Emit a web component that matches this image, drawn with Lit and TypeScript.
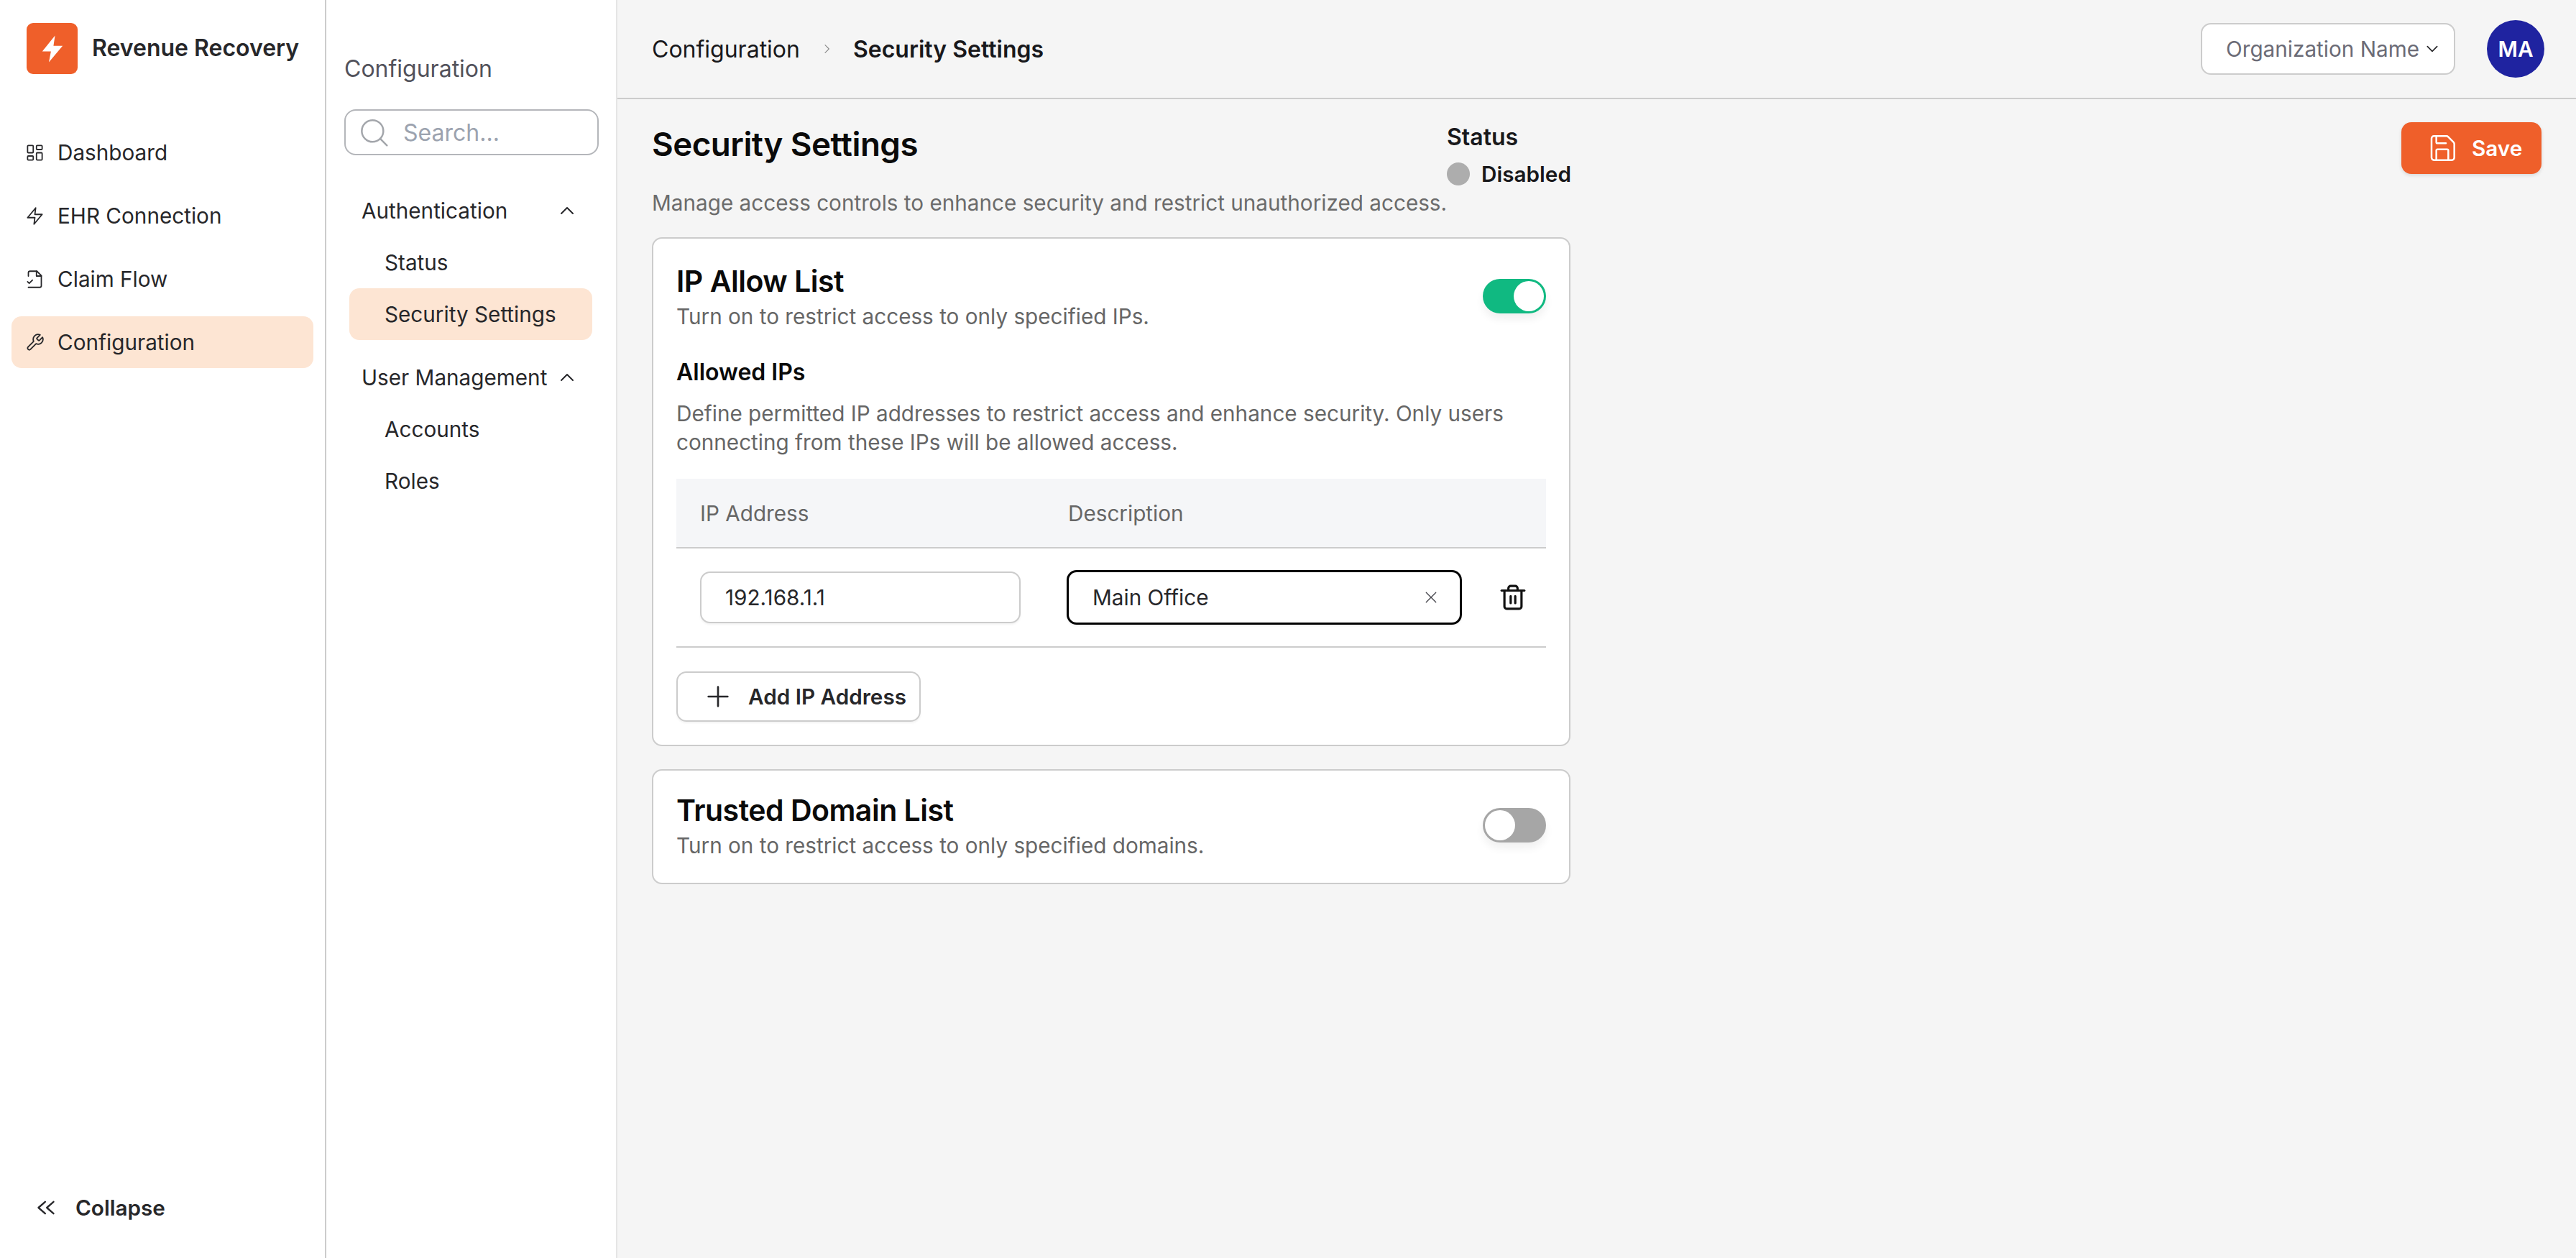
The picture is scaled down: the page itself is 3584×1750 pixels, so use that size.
import { LitElement, css, html, svg } from 'lit'
import { customElement, property } from 'lit/decorators.js'

const icons: Record<string, unknown> = {
  dashboard: svg`<rect x="3" y="3" width="7" height="9" rx="1"/><rect x="14" y="3" width="7" height="5" rx="1"/><rect x="14" y="12" width="7" height="9" rx="1"/><rect x="3" y="16" width="7" height="5" rx="1"/>`,
  zap: svg`<path d="M13 2 3 14h9l-1 8 10-12h-9l1-8z"/>`,
  claim: svg`<path d="M4 8V4a2 2 0 0 1 2-2h8.5L20 7.5V20a2 2 0 0 1-2 2H4"/><path d="M14 2v6h6"/><path d="m3 15 2 2 4-4"/>`,
  wrench: svg`<path d="M14.7 6.3a1 1 0 0 0 0 1.4l1.6 1.6a1 1 0 0 0 1.4 0l3.77-3.77a6 6 0 0 1-7.94 7.94l-6.91 6.91a2.12 2.12 0 0 1-3-3l6.91-6.91a6 6 0 0 1 7.94-7.94l-3.76 3.76z"/>`,
  up: svg`<path d="m4 16 8-8 8 8"/>`,
  down: svg`<path d="m4 8 8 8 8-8"/>`,
  right: svg`<path d="m9 4 8 8-8 8"/>`,
  collapse: svg`<path d="m11 5-8 7 8 7"/><path d="m21 5-8 7 8 7"/>`,
  search: svg`<circle cx="11" cy="11" r="9"/><path d="m23 23-5.5-5.5"/>`,
  save: svg`<path d="M5 2h10.5a2 2 0 0 1 1.4.6l4.5 4.5a2 2 0 0 1 .6 1.4V20a2 2 0 0 1-2 2H5a2 2 0 0 1-2-2V4a2 2 0 0 1 2-2z"/><path d="M7 2v5a1 1 0 0 0 1 1h7"/><path d="M7 22v-8a1 1 0 0 1 1-1h8a1 1 0 0 1 1 1v8"/>`,
  x: svg`<path d="M3 3l18 18M21 3 3 21"/>`,
  trash: svg`<path d="M2 6h20"/><path d="M4.5 6v14a2 2 0 0 0 2 2h11a2 2 0 0 0 2-2V6"/><path d="M8 6V4a2 2 0 0 1 2-2h4a2 2 0 0 1 2 2v2"/><path d="M10 11v6M14 11v6"/>`,
  plus: svg`<path d="M12 2v20M2 12h20"/>`,
}

@customElement('ui-icon')
export class UiIcon extends LitElement {
  @property() name = 'zap';
  @property({ type: Number }) size = 24;
  @property({ type: Number }) stroke = 2;

  static styles = css`
    :host { display: inline-flex; flex: none; }
    svg { display: block; fill: none; stroke: currentColor; stroke-linecap: round; stroke-linejoin: round; }
  `

  render() {
    return html`<svg width=${this.size} height=${this.size} viewBox="0 0 24 24" stroke-width=${this.stroke}>${icons[this.name]}</svg>`
  }
}

@customElement('app-root')
export class AppRoot extends LitElement {
  static styles = css`
    :host {
      display: flex;
      height: 1750px;
      font-family: Inter, "Liberation Sans", sans-serif;
      font-size: 29.7px;
      color: #27272a;
      background: #f5f5f5;
      overflow: hidden;
    }

    /* primary sidebar */
    .sidebar {
      width: 454px;
      flex: none;
      box-sizing: border-box;
      background: #fff;
      border-right: 2px solid #ccc;
      display: flex;
      flex-direction: column;
      padding: 32px 16px 0;
    }
    .brand { display: flex; align-items: center; gap: 20px; padding-left: 21px; }
    .logo {
      width: 71px;
      height: 71px;
      border-radius: 9px;
      background: #ef5f2a;
      color: #fff;
      display: flex;
      align-items: center;
      justify-content: center;
    }
    .logo svg { display: block; }
    .brand-name { font-size: 32px; font-weight: 600; margin-top: -2px; }
    .nav { display: flex; flex-direction: column; gap: 16px; margin-top: 73px; }
    .nav-item {
      height: 72px;
      border-radius: 14px;
      display: flex;
      align-items: center;
      gap: 18px;
      padding-left: 19px;
    }
    .nav-item.active { background: #fde5d3; }
    .collapse {
      margin-top: auto;
      margin-bottom: 52px;
      display: flex;
      align-items: center;
      gap: 27px;
      padding-left: 34px;
      font-weight: 600;
    }

    /* secondary sidebar */
    .subnav {
      width: 405px;
      flex: none;
      box-sizing: border-box;
      background: #fff;
      border-right: 2px solid #e5e5e5;
      padding: 0 25px;
    }
    .subnav-title { font-size: 32px; color: #52525b; line-height: 40px; margin-top: 76px; }
    .search {
      width: 354px;
      height: 64px;
      margin-top: 36px;
      box-sizing: border-box;
      border: 2px solid #b4b6ba;
      border-radius: 16px;
      display: flex;
      align-items: center;
      gap: 21px;
      padding-left: 19px;
      font-size: 32px;
      color: #9ca3af;
    }
    .search ui-icon { color: #a3a6ab; }
    .group {
      display: flex;
      align-items: center;
      justify-content: space-between;
      height: 72px;
      padding: 0 31px 0 24px;
      color: #27272a;
    }
    .groups { margin-top: 41px; }
    .sub-item {
      height: 72px;
      margin: 0 7px;
      border-radius: 14px;
      display: flex;
      align-items: center;
      padding-left: 49px;
      width: 338px;
      box-sizing: border-box;
    }
    .sub-item.active { background: #fde5d3; }
    .group-items { display: flex; flex-direction: column; margin-bottom: 16px; }

    /* main */
    .main { flex: 1; min-width: 0; display: flex; flex-direction: column; }
    .topbar {
      height: 138px;
      flex: none;
      box-sizing: border-box;
      border-bottom: 2px solid #ccc;
      display: flex;
      align-items: center;
      padding: 0 44px 0 48px;
      font-size: 32px;
      color: #18181b;
    }
    .crumb { display: flex; align-items: center; gap: 29px; }
    .crumb ui-icon { color: #888; }
    .crumb b { font-weight: 600; }
    .topbar-right { margin-left: auto; display: flex; align-items: center; gap: 44px; }
    .org {
      width: 354px;
      height: 72px;
      box-sizing: border-box;
      background: #fff;
      border: 2px solid #ccc;
      border-radius: 14px;
      display: flex;
      align-items: center;
      gap: 8px;
      padding-left: 33px;
      font-size: 29.7px;
      color: #6b6b76;
    }
    .org ui-icon { color: #27272a; }
    .avatar {
      width: 80px;
      height: 80px;
      border-radius: 50%;
      background: #1f23a0;
      color: #fff;
      font-weight: 600;
      font-size: 29.7px;
      display: flex;
      align-items: center;
      justify-content: center;
    }

    .content { padding: 32px 48px 0; display: flex; flex-direction: column; }
    .page-head { display: flex; align-items: flex-start; height: 160px; }
    .page-title { width: 1106px; flex: none; }
    h1 { margin: 0; font-size: 45.7px; font-weight: 600; color: #0a0a0a; line-height: 62px; letter-spacing: -0.5px; }
    .page-sub { color: #6b6b6b; margin-top: 30px; white-space: nowrap; line-height: 40px; }
    .status { display: flex; flex-direction: column; gap: 12px; }
    .status-label { font-size: 32px; font-weight: 600; color: #18181b; line-height: 42px; }
    .status-value { display: flex; align-items: center; gap: 16px; font-weight: 600; color: #18181b; line-height: 36px; }
    .dot { width: 32px; height: 32px; border-radius: 50%; background: #adadad; }
    .save {
      margin-left: auto;
      width: 195px;
      height: 72px;
      box-sizing: border-box;
      border-radius: 14px;
      background: #ef5f2a;
      color: #fff;
      font-weight: 600;
      display: flex;
      align-items: center;
      gap: 21px;
      padding-left: 37px;
      box-shadow: 0 2px 5px rgba(0, 0, 0, 0.12);
    }

    .card {
      width: 1278px;
      box-sizing: border-box;
      background: #fff;
      border: 2px solid #ccc;
      border-radius: 14px;
      padding: 32px;
      margin-bottom: 32px;
    }
    .card-head { display: flex; align-items: center; justify-content: space-between; }
    .card-title { font-size: 41px; font-weight: 600; color: #0a0a0a; line-height: 54px; letter-spacing: -0.5px; }
    .card-sub { color: #666; line-height: 40px; margin-top: 2px; }
    .toggle {
      width: 88px;
      height: 48px;
      border-radius: 24px;
      background: #10b981;
      display: flex;
      align-items: center;
      justify-content: flex-end;
      padding: 0 3px;
      box-sizing: border-box;
      box-shadow: 0 8px 12px rgba(0, 0, 0, 0.06);
    }
    .toggle.off { background: #a6a6a6; justify-content: flex-start; }
    .knob { width: 42px; height: 42px; border-radius: 50%; background: #fff; }
    h2 { margin: 37px 0 0; font-size: 32px; font-weight: 600; color: #0a0a0a; line-height: 42px; }
    .desc { color: #666; line-height: 40px; margin-top: 16px; }
    .table { margin-top: 31px; }
    .thead {
      height: 97px;
      box-sizing: border-box;
      background: #f5f6f8;
      border-bottom: 2px solid #ccc;
      display: flex;
      align-items: center;
      padding: 0 32px 0 33px;
      color: #666;
    }
    .thead div:first-child, .row .ip { width: 446px; flex: none; margin-right: 66px; }
    .row {
      height: 138px;
      box-sizing: border-box;
      border-bottom: 2px solid #ccc;
      display: flex;
      align-items: center;
      padding-left: 33px;
    }
    .input {
      height: 72px;
      box-sizing: border-box;
      background: #fff;
      border: 2px solid #ccc;
      border-radius: 14px;
      display: flex;
      align-items: center;
      padding: 0 31px 0 33px;
      color: #27272a;
      box-shadow: 0 2px 3px rgba(0, 0, 0, 0.05);
    }
    .input.focus {
      width: 550px;
      height: 76px;
      margin-left: -2px;
      border: 3px solid #000;
      justify-content: space-between;
      color: #27272a;
    }
    .input.focus ui-icon { color: #3f3f46; }
    .trash { margin-left: 52px; color: #111; }
    .add {
      margin-top: 33px;
      width: 340px;
      height: 70px;
      box-sizing: border-box;
      border: 2px solid #ccc;
      border-radius: 14px;
      display: flex;
      align-items: center;
      gap: 26px;
      padding-left: 40px;
      font-weight: 600;
      box-shadow: 0 2px 3px rgba(0, 0, 0, 0.05);
    }
    .compact { padding: 28px 32px 32px; }
  `

  private navItem(icon: string, label: string, active = false) {
    return html`
      <div class="nav-item ${active ? 'active' : ''}">
        <ui-icon name=${icon} size="27" stroke="1.6"></ui-icon>
        <span>${label}</span>
      </div>
    `
  }

  private subItem(label: string, active = false) {
    return html`<div class="sub-item ${active ? 'active' : ''}">${label}</div>`
  }

  private group(label: string) {
    return html`
      <div class="group">
        <span>${label}</span>
        <ui-icon name="up" size="24" stroke="2"></ui-icon>
      </div>
    `
  }

  render() {
    return html`
      <aside class="sidebar">
        <div class="brand">
          <div class="logo">
            <svg width="34" height="40" viewBox="0 0 24 28" fill="#fff"><path d="M14.5 1 2 16.5h8.5L8.5 27 22 11h-9z"/></svg>
          </div>
          <span class="brand-name">Revenue Recovery</span>
        </div>
        <nav class="nav">
          ${this.navItem('dashboard', 'Dashboard')}
          ${this.navItem('zap', 'EHR Connection')}
          ${this.navItem('claim', 'Claim Flow')}
          ${this.navItem('wrench', 'Configuration', true)}
        </nav>
        <div class="collapse">
          <ui-icon name="collapse" size="28" stroke="2"></ui-icon>
          <span>Collapse</span>
        </div>
      </aside>

      <aside class="subnav">
        <div class="subnav-title">Configuration</div>
        <div class="search">
          <ui-icon name="search" size="40" stroke="1.5"></ui-icon>
          <span>Search...</span>
        </div>
        <div class="groups">
          ${this.group('Authentication')}
          <div class="group-items">
            ${this.subItem('Status')}
            ${this.subItem('Security Settings', true)}
          </div>
          ${this.group('User Management')}
          <div class="group-items">
            ${this.subItem('Accounts')}
            ${this.subItem('Roles')}
          </div>
        </div>
      </aside>

      <main class="main">
        <header class="topbar">
          <div class="crumb">
            <span>Configuration</span>
            <ui-icon name="right" size="16" stroke="1.6"></ui-icon>
            <b>Security Settings</b>
          </div>
          <div class="topbar-right">
            <div class="org">
              <span>Organization Name</span>
              <ui-icon name="down" size="20" stroke="2"></ui-icon>
            </div>
            <div class="avatar">MA</div>
          </div>
        </header>

        <div class="content">
          <div class="page-head">
            <div class="page-title">
              <h1>Security Settings</h1>
              <div class="page-sub">Manage access controls to enhance security and restrict unauthorized access.</div>
            </div>
            <div class="status">
              <div class="status-label">Status</div>
              <div class="status-value"><span class="dot"></span>Disabled</div>
            </div>
            <div class="save">
              <ui-icon name="save" size="40" stroke="1.5"></ui-icon>
              <span>Save</span>
            </div>
          </div>

          <section class="card">
            <div class="card-head">
              <div>
                <div class="card-title">IP Allow List</div>
                <div class="card-sub">Turn on to restrict access to only specified IPs.</div>
              </div>
              <div class="toggle"><span class="knob"></span></div>
            </div>
            <h2>Allowed IPs</h2>
            <div class="desc">Define permitted IP addresses to restrict access and enhance security. Only users<br>connecting from these IPs will be allowed access.</div>
            <div class="table">
              <div class="thead">
                <div>IP Address</div>
                <div>Description</div>
              </div>
              <div class="row">
                <div class="input ip">192.168.1.1</div>
                <div class="input focus">
                  <span>Main Office</span>
                  <ui-icon name="x" size="18" stroke="1.7"></ui-icon>
                </div>
                <ui-icon class="trash" name="trash" size="38" stroke="2"></ui-icon>
              </div>
            </div>
            <div class="add">
              <ui-icon name="plus" size="32" stroke="2"></ui-icon>
              <span>Add IP Address</span>
            </div>
          </section>

          <section class="card compact">
            <div class="card-head">
              <div>
                <div class="card-title">Trusted Domain List</div>
                <div class="card-sub">Turn on to restrict access to only specified domains.</div>
              </div>
              <div class="toggle off"><span class="knob"></span></div>
            </div>
          </section>
        </div>
      </main>
    `
  }
}

declare global {
  interface HTMLElementTagNameMap {
    'app-root': AppRoot
    'ui-icon': UiIcon
  }
}
